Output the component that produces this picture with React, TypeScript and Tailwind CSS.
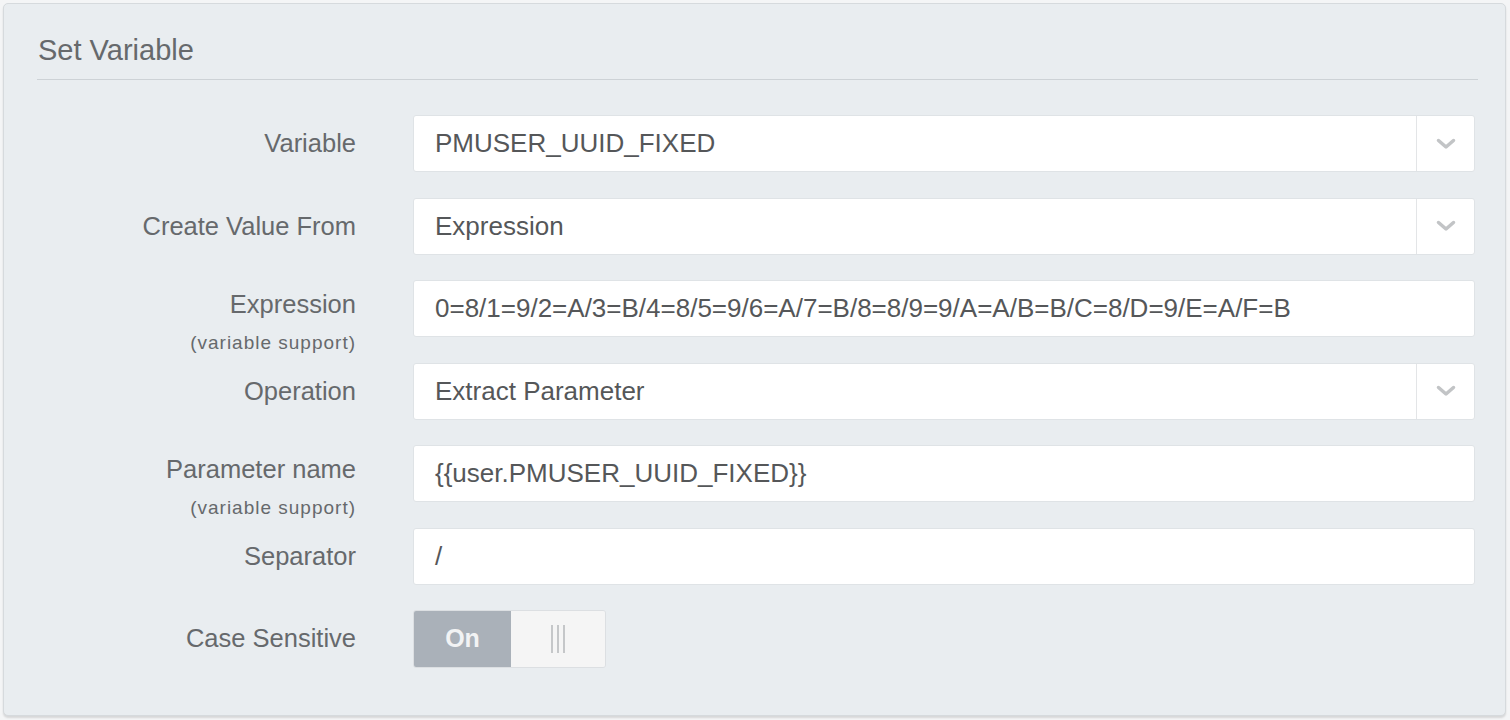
import { ReactNode } from 'react';

type Row = {
  label: string;
  sub?: boolean;
  value: string;
  select?: boolean;
};

const rows: Row[] = [
  { label: 'Variable', value: 'PMUSER_UUID_FIXED', select: true },
  { label: 'Create Value From', value: 'Expression', select: true },
  { label: 'Expression', sub: true, value: '0=8/1=9/2=A/3=B/4=8/5=9/6=A/7=B/8=8/9=9/A=A/B=B/C=8/D=9/E=A/F=B' },
  { label: 'Operation', value: 'Extract Parameter', select: true },
  { label: 'Parameter name', sub: true, value: '{{user.PMUSER_UUID_FIXED}}' },
  { label: 'Separator', value: '/' },
];

function Chevron() {
  return (
    <svg width="20" height="12" viewBox="0 0 20 12" fill="none">
      <path d="M2.5 2.5 L10 9 L17.5 2.5" stroke="#c2c4c6" strokeWidth="3.5" strokeLinecap="round" strokeLinejoin="round" />
    </svg>
  );
}

function Label({ row }: { row: Row }) {
  if (row.sub) {
    return (
      <div className="w-[319px] shrink-0 pt-[9px] text-right">
        <div className="text-[25.5px] leading-[30px] text-[#66696c]">{row.label}</div>
        <div className="mt-[13px] text-[19px] leading-[22px] tracking-[1px] text-[#66696c]">(variable support)</div>
      </div>
    );
  }
  return (
    <div className="w-[319px] shrink-0 h-[57px] flex items-center justify-end text-[25.5px] text-[#66696c]">
      {row.label}
    </div>
  );
}

function Field({ row }: { row: Row }) {
  return (
    <div className="w-[1062px] h-[57px] flex bg-white border border-[#dfe3e6] rounded-[3px]">
      <div className="flex-1 flex items-center pl-[21px] text-[26px] text-[#555759] whitespace-nowrap">{row.value}</div>
      {row.select && (
        <div className="w-[58px] border-l border-[#e3e5e7] flex items-center justify-center">
          <Chevron />
        </div>
      )}
    </div>
  );
}

function FormRow({ children }: { children: ReactNode }) {
  return <div className="flex items-start gap-[57px] h-[57px]">{children}</div>;
}

export default function App() {
  return (
    <div className="w-[1510px] h-[720px] bg-[#f4f5f6] pt-[3px] pl-[3px] pr-[4px]" style={{ fontFamily: '"Liberation Sans", Arial, sans-serif' }}>
      <div className="h-[713px] bg-[#e9edf0] border border-[#d6dadd] rounded-[5px] shadow-[0_2px_2px_rgba(0,0,0,0.12)] pl-[33px] pr-[27px] pt-[28px]">
        <h1 className="text-[29px] leading-[36px] text-[#66696c] pl-[1px]">Set Variable</h1>
        <div className="mt-[11px] h-px bg-[#cdd2d6]" />

        <div className="mt-[35px] flex flex-col gap-[25.5px]">
          {rows.map((r) => (
            <FormRow key={r.label}>
              <Label row={r} />
              <Field row={r} />
            </FormRow>
          ))}
          <FormRow>
            <Label row={{ label: 'Case Sensitive', value: '' }} />
            <div className="flex h-[58px] w-[193px] rounded-[3px] border border-[#dcdfe2] overflow-hidden">
              <div className="w-[97px] bg-[#aab1b9] flex items-center justify-center text-[25px] font-bold text-[#f2f3f4]">On</div>
              <div className="flex-1 bg-[#f5f5f5] flex items-center justify-center gap-[4px]">
                <span className="w-[2px] h-[28px] bg-[#c5c7c9]" />
                <span className="w-[2px] h-[28px] bg-[#c5c7c9]" />
                <span className="w-[2px] h-[28px] bg-[#c5c7c9]" />
              </div>
            </div>
          </FormRow>
        </div>
      </div>
    </div>
  );
}
